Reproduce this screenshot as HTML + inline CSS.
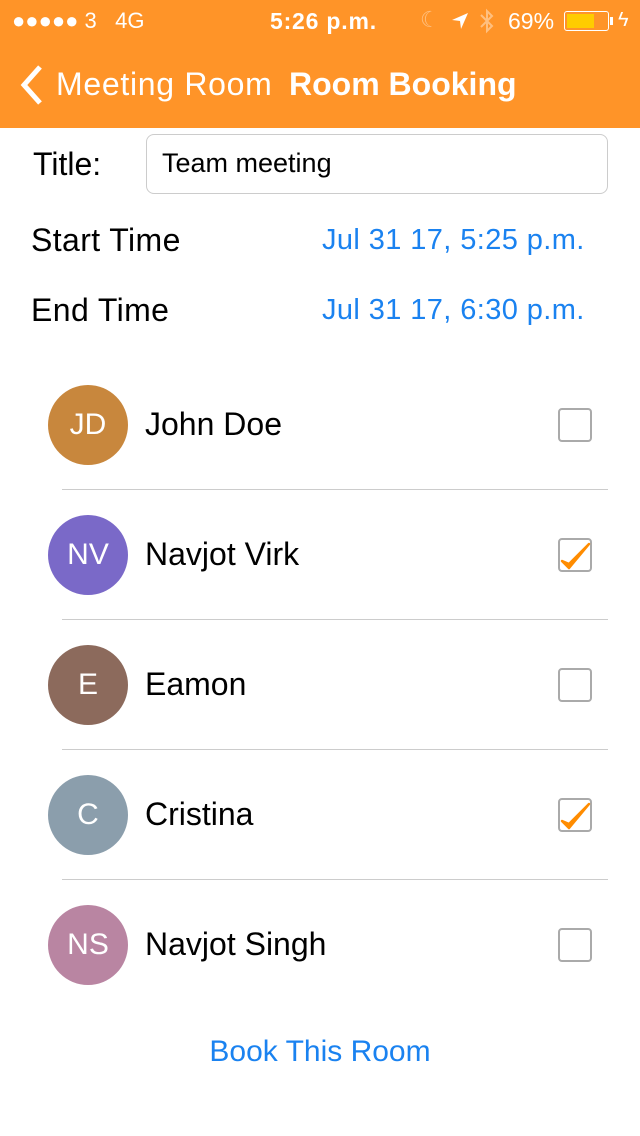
<!DOCTYPE html>
<html><head><meta charset="utf-8"><style>
*{margin:0;padding:0;box-sizing:border-box}
body{width:640px;height:1136px;background:#fff;font-family:"Liberation Sans",sans-serif;position:relative;overflow:hidden}
.nav{position:absolute;left:0;top:0;width:640px;height:128px;background:#FF9428;color:#fff}
.abs{position:absolute;white-space:nowrap}
.av{position:absolute;left:48px;width:80px;height:80px;border-radius:50%;color:#fff;font-size:30px;text-align:center;line-height:80px}
.nm{position:absolute;left:145px;font-size:32px;color:#000}
.cb{position:absolute;left:558px;width:34px;height:34px;border:2px solid #aaa;border-radius:4px}
.sep{position:absolute;left:62px;right:32px;height:1px;background:#ccc}
.blue{color:#1a82f0}
</style></head><body>
<div class="nav">
<div class="abs" style="left:12px;top:8px;font-size:22px">●●●●● 3&nbsp;&nbsp;&nbsp;4G</div>
<div class="abs" style="left:270px;top:8px;font-size:23px;font-weight:bold;letter-spacing:0.8px">5:26 p.m.</div>
<div class="abs" style="left:420px;top:7px;font-size:22px;color:#ffc080">☾</div>
<svg class="abs" style="left:450px;top:11px" width="20" height="20"><path d="M2 9L18 2L11 18L10 10Z" fill="#fff"/></svg>
<svg class="abs" style="left:478px;top:8px" width="18" height="26"><path d="M3 7L14 18L9 23V3L14 8L3 19" stroke="#ffc080" stroke-width="2" fill="none"/></svg>
<div class="abs" style="left:508px;top:8px;font-size:23px">69%</div>
<div class="abs" style="left:564px;top:11px;width:45px;height:20px;border:1.5px solid #fff;border-radius:3px;padding:2px"><div style="width:27px;height:100%;background:#FFCC00"></div></div>
<div class="abs" style="left:610px;top:17px;width:3px;height:8px;background:#fff"></div>
<div class="abs" style="left:618px;top:9px;font-size:20px">ϟ</div>
<svg class="abs" style="left:16px;top:64px" width="30" height="42"><path d="M24 3L8 21L24 39" stroke="#fff" stroke-width="5" fill="none"/></svg>
<div class="abs" style="left:56px;top:66px;font-size:32px;letter-spacing:0.7px">Meeting Room</div>
<div class="abs" style="left:289px;top:66px;font-size:32px;font-weight:bold">Room Booking</div>
</div>
<div class="abs" style="left:33px;top:146px;font-size:32px">Title:</div>
<div class="abs" style="left:146px;top:134px;width:462px;height:60px;border:1px solid #ccc;border-radius:8px;font-size:27px;padding:13px 15px">Team meeting</div>
<div class="abs" style="left:31px;top:222px;font-size:32px;letter-spacing:0.4px">Start Time</div>
<div class="abs blue" style="left:322px;top:224px;font-size:29px;letter-spacing:0.4px">Jul 31 17, 5:25 p.m.</div>
<div class="abs" style="left:31px;top:292px;font-size:32px;letter-spacing:0.4px">End Time</div>
<div class="abs blue" style="left:322px;top:294px;font-size:29px;letter-spacing:0.4px">Jul 31 17, 6:30 p.m.</div>

<div class="av" style="top:385px;background:#C8873D">JD</div><div class="nm" style="top:406px">John Doe</div><div class="cb" style="top:408px"></div>
<div class="sep" style="top:489px"></div>
<div class="av" style="top:515px;background:#7A69C8">NV</div><div class="nm" style="top:536px">Navjot Virk</div><div class="cb" style="top:538px"></div>
<svg class="abs" style="left:556px;top:536px" width="40" height="40"><path d="M6 25L13 32L33 8L13 28Z" fill="#FF8C00" stroke="#FF8C00" stroke-width="2.5" stroke-linejoin="round"/></svg>
<div class="sep" style="top:619px"></div>
<div class="av" style="top:645px;background:#8C6A5C">E</div><div class="nm" style="top:666px">Eamon</div><div class="cb" style="top:668px"></div>
<div class="sep" style="top:749px"></div>
<div class="av" style="top:775px;background:#8B9EAC">C</div><div class="nm" style="top:796px">Cristina</div><div class="cb" style="top:798px"></div>
<svg class="abs" style="left:556px;top:796px" width="40" height="40"><path d="M6 25L13 32L33 8L13 28Z" fill="#FF8C00" stroke="#FF8C00" stroke-width="2.5" stroke-linejoin="round"/></svg>
<div class="sep" style="top:879px"></div>
<div class="av" style="top:905px;background:#B985A2">NS</div><div class="nm" style="top:926px">Navjot Singh</div><div class="cb" style="top:928px"></div>
<div class="abs blue" style="left:0;width:640px;text-align:center;top:1035px;font-size:30px">Book This Room</div>
</body></html>
